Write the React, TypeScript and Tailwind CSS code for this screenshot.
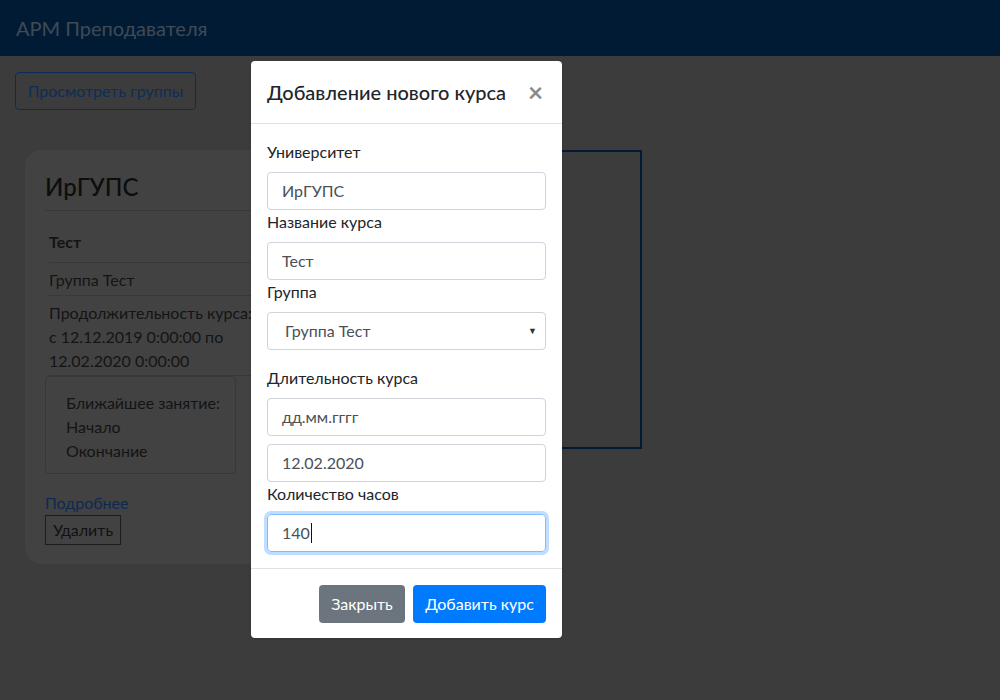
export default function App() {
  const font = { fontFamily: 'Lato, "Open Sans", sans-serif' };
  return (
    <div className="relative h-[700px] w-[1000px] overflow-hidden bg-[#3c3c3c]" style={font}>
      <nav className="flex h-14 items-center bg-[#021b35] px-4">
        <span className="text-[20px] text-[#3f4a57]">АРМ Преподавателя</span>
      </nav>

      <div className="px-[15px] pt-4">
        <button className="h-[38px] w-[181px] rounded border border-[#0d2c55] text-[16px] text-[#0e2d57]">
          Просмотреть группы
        </button>

        <div className="mt-10 flex items-start gap-6 pl-[10px]">
          <div className="w-[300px] rounded-2xl bg-[#424242] px-5 pb-[19px] pt-[22px] text-[16px] text-[#141414]">
            <h2 className="pb-[9px] text-[24px] font-medium leading-[29px] text-[#0d0d0d]">ИрГУПС</h2>
            <div className="border-t border-[#383838] px-1 leading-[24px]">
              <div className="border-b border-[#383838] pb-2 pt-[19px] font-bold">Тест</div>
              <div className="border-b border-[#383838] pb-[3px] pt-[5px]">Группа Тест</div>
              <div className="border-b border-[#383838] pb-[2px] pt-[5px]">
                Продолжительность курса:
                <br />с 12.12.2019 0:00:00 по
                <br />
                12.02.2020 0:00:00
              </div>
            </div>
            <div className="w-[191px] rounded border border-[#383838] pb-[10px] pl-5 pr-2 pt-[14px] leading-[24px]">
              <div className="whitespace-nowrap">Ближайшее занятие:</div>
              <div>Начало</div>
              <div>Окончание</div>
            </div>
            <div className="mt-[17px] leading-[24px] text-[#0c2a52]">Подробнее</div>
            <button className="h-[30px] border border-[#1d1d1d] px-[7px] text-[16px] text-[#111]">Удалить</button>
          </div>
          <div className="h-[299px] w-[293px] border-2 border-[#021b35]" />
        </div>
      </div>

      <div className="absolute inset-0 pl-[251px] pt-[61px]">
        <div className="w-[311px] rounded bg-white text-[#212529] shadow">
          <div className="flex h-[63px] items-center justify-between border-b border-[#dee2e6] px-4">
            <h5 className="text-[20px] font-medium">Добавление нового курса</h5>
            <span className="pr-[3px] text-[26px] font-bold leading-none text-[#8a8a8a]">×</span>
          </div>
          <div className="px-4 pb-4 pt-4 text-[16px]">
            <label className="block leading-[24px]">Университет</label>
            <div className="mt-2 flex h-[38px] items-center rounded border border-[#ced4da] px-[14px] text-[#495057]">ИрГУПС</div>
            <label className="block leading-[24px]">Название курса</label>
            <div className="mt-2 flex h-[38px] items-center rounded border border-[#ced4da] px-[14px] text-[#495057]">Тест</div>
            <label className="block leading-[24px]">Группа</label>
            <div className="mt-2 flex h-[38px] items-center justify-between rounded border border-[#ced4da] pl-[17px] pr-2 text-[#495057]">
              <span>Группа Тест</span>
              <span className="text-[9px] text-[#333]">▼</span>
            </div>
            <label className="mt-4 block leading-[24px]">Длительность курса</label>
            <div className="mt-2 flex h-[38px] items-center rounded border border-[#ced4da] px-[14px] text-[#495057]">дд.мм.гггг</div>
            <div className="mt-2 flex h-[38px] items-center rounded border border-[#ced4da] px-[14px] text-[#495057]">12.02.2020</div>
            <label className="block leading-[24px]">Количество часов</label>
            <div className="mt-2 flex h-[38px] items-center rounded border border-[#80bdff] px-[14px] text-[#495057] shadow-[0_0_0_3px_rgba(0,123,255,0.25)]">
              140<span className="ml-px inline-block h-[20px] w-px bg-[#111]" />
            </div>
          </div>
          <div className="flex justify-end gap-2 border-t border-[#dee2e6] px-4 pb-[15px] pt-4">
            <button className="h-[38px] w-[86px] rounded bg-[#6c757d] text-[16px] text-white">Закрыть</button>
            <button className="h-[38px] w-[133px] rounded bg-[#007bff] text-[16px] text-white">Добавить курс</button>
          </div>
        </div>
      </div>
    </div>
  );
}
